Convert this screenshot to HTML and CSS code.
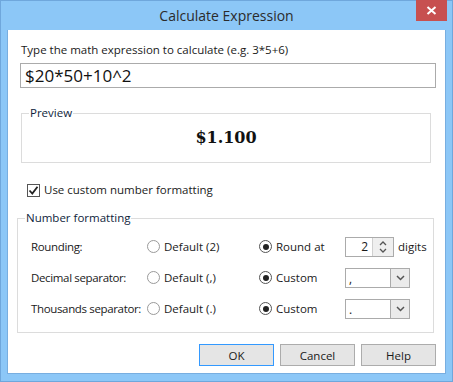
FILE: index.html
```html
<!DOCTYPE html>
<html>
<head>
<meta charset="utf-8">
<link rel="stylesheet" href="styles.css">
</head>
<body>
<div class="window">
  <div class="titlebar">
    <span class="title">Calculate Expression</span>
    <div class="close"><svg width="11" height="9" viewBox="0 0 11 9"><path d="M1.5 1 L9.5 8 M9.5 1 L1.5 8" stroke="#fff" stroke-width="2"/></svg></div>
  </div>
  <div class="client">
    <div class="prompt">Type the math expression to calculate (e.g. 3*5+6)</div>
    <div class="expr">$20*50+10^2</div>
    <fieldset class="group preview">
      <legend>Preview</legend>
      <div class="result">$1.100</div>
    </fieldset>
    <label class="check-row"><span class="checkbox"><svg width="11" height="11" viewBox="0 0 11 11"><path d="M1.5 5.5 L4.3 8.5 L9.5 1.8" fill="none" stroke="#222" stroke-width="1.8"/></svg></span>Use custom number formatting</label>
    <fieldset class="group numfmt">
      <legend>Number formatting</legend>
      <div class="grid">
        <span class="lbl">Rounding:</span>
        <span class="opt"><span class="radio"></span>Default (2)</span>
        <span class="opt"><span class="radio on"></span>Round at</span>
        <span class="ctl">
          <span class="spin"><span class="spin-val">2</span><span class="spin-btns"><svg width="8" height="16" viewBox="0 0 8 16"><path d="M1 6 L4 3 L7 6 M1 10 L4 13 L7 10" fill="none" stroke="#555" stroke-width="1.3"/></svg></span></span>
          <span class="digits">digits</span>
        </span>
        <span class="lbl">Decimal separator:</span>
        <span class="opt"><span class="radio"></span>Default (,)</span>
        <span class="opt"><span class="radio on"></span>Custom</span>
        <span class="ctl"><span class="combo"><span class="combo-val">,</span><span class="combo-btn"><svg width="9" height="6" viewBox="0 0 9 6"><path d="M1 1 L4.5 4.5 L8 1" fill="none" stroke="#555" stroke-width="1.5"/></svg></span></span></span>
        <span class="lbl">Thousands separator:</span>
        <span class="opt"><span class="radio"></span>Default (.)</span>
        <span class="opt"><span class="radio on"></span>Custom</span>
        <span class="ctl"><span class="combo"><span class="combo-val">.</span><span class="combo-btn"><svg width="9" height="6" viewBox="0 0 9 6"><path d="M1 1 L4.5 4.5 L8 1" fill="none" stroke="#555" stroke-width="1.5"/></svg></span></span></span>
      </div>
    </fieldset>
    <div class="buttons">
      <button class="btn default">OK</button>
      <button class="btn">Cancel</button>
      <button class="btn">Help</button>
    </div>
  </div>
</div>
</body>
</html>
```
FILE: styles.css
```css
html, body { margin: 0; padding: 0; }
body { width: 453px; height: 382px; overflow: hidden; font-family: "Open Sans", "Noto Sans", sans-serif; font-size: 11.5px; color: #1a1a1a; }
.window { width: 453px; height: 382px; box-sizing: border-box; border: 1px solid #6fa7dc; background: #8cc7f7; display: flex; flex-direction: column; }
.titlebar { height: 29px; flex: none; position: relative; display: flex; justify-content: center; align-items: center; }
.title { font-size: 14px; color: #2b2b2b; margin-top: -1px; }
.close { position: absolute; top: -1px; right: 5px; width: 31px; height: 21px; background: #c75050; display: flex; align-items: center; justify-content: center; }
.client { flex: 1; margin: 0 6px 7px 6px; background: #fff; border: 1px solid #78aee0; border-top: none; padding: 11px 0 0 0; display: flex; flex-direction: column; }
.prompt { margin-left: 13px; line-height: 17px; }
.expr { margin: 5px 0 0 12px; width: 410px; height: 23px; border: 1px solid #ababab; font-size: 17px; line-height: 23px; padding-left: 4px; color: #111; }
.group { margin: 0; padding: 0; border: 1px solid #dcdcdc; }
.group legend { margin-left: 7px; padding: 0 1px; line-height: 16px; color: #0f1e3c; white-space: nowrap; }
.preview { margin: 17px 0 0 13px; width: 410px; height: 58px; box-sizing: border-box; }
.result { text-align: center; font-family: "DejaVu Serif", "Liberation Serif", serif; font-weight: bold; font-size: 16px; line-height: 20px; margin-top: 7px; color: #111; }
.check-row { display: flex; align-items: center; margin: 19px 0 0 19px; line-height: 16px; }
.checkbox { width: 11px; height: 11px; border: 1px solid #555; margin-right: 4px; display: flex; align-items: center; justify-content: center; }
.numfmt { margin: 12px 0 0 9px; width: 417px; height: 123px; box-sizing: border-box; }
.grid { display: grid; grid-template-columns: 116px 112px 86px auto; grid-auto-rows: 31px; align-items: center; margin: 5px 0 0 13px; white-space: nowrap; }
.lbl { letter-spacing: -0.35px; }
.opt { display: flex; align-items: center; }
.radio { width: 11px; height: 11px; border: 1px solid #9a9a9a; border-radius: 50%; margin-right: 4px; box-sizing: content-box; position: relative; background: #fff; }
.radio.on { border-color: #555; }
.radio.on::after { content: ""; position: absolute; left: 2.5px; top: 2.5px; width: 6px; height: 6px; border-radius: 50%; background: #222; }
.ctl { display: flex; align-items: center; }
.spin { width: 47px; height: 18px; border: 1px solid #ababab; display: flex; }
.spin-val { flex: 1; text-align: right; padding-right: 4px; line-height: 18px; font-size: 12px; }
.spin-btns { width: 20px; background: #efefef; border-left: 1px solid #d0d0d0; display: flex; align-items: center; justify-content: center; }
.digits { margin-left: 4px; }
.combo { width: 63px; height: 18px; border: 1px solid #ababab; display: flex; }
.combo-val { flex: 1; padding-left: 3px; line-height: 20px; font-size: 12px; }
.combo-btn { width: 18px; background: #ebebeb; border-left: 1px solid #ababab; display: flex; align-items: center; justify-content: center; }
.buttons { display: flex; justify-content: flex-end; gap: 6px; margin: 11px 9px 0 0; }
.btn { width: 75px; height: 22px; box-sizing: border-box; border: 1px solid #acacac; background: #e5e5e5; font-family: inherit; font-size: 11.5px; color: #1a1a1a; padding: 0; }
.btn.default { border-color: #3399ff; }
```
